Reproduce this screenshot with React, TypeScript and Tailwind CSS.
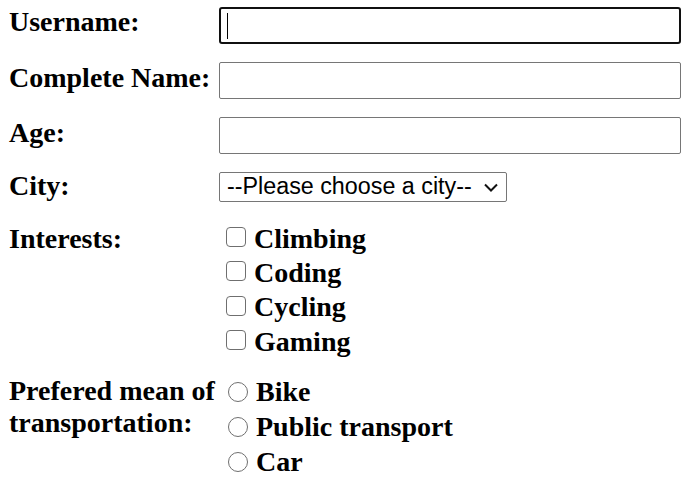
const interests = ['Climbing', 'Coding', 'Cycling', 'Gaming'];
const transports = ['Bike', 'Public transport', 'Car'];

function Label({ children, className = '' }: { children: React.ReactNode; className?: string }) {
  return <div className={`w-[210px] shrink-0 leading-[32px] ${className}`}>{children}</div>;
}

export default function App() {
  return (
    <div className="min-h-[496px] bg-white pl-[9px] pt-[7px] text-[28px] font-bold text-black font-['Liberation_Serif',serif]">
      <div className="flex flex-col gap-[18px]">
        <div className="flex items-center h-[37px]">
          <Label className="pb-[7px]">Username:</Label>
          <div className="flex items-center h-[37px] w-[462px] border-2 border-[#101010] rounded-[3px] px-[6px]">
            <span className="w-px h-[26px] bg-black" />
          </div>
        </div>
        <div className="flex items-center h-[37px]">
          <Label className="pb-[6px]">Complete Name:</Label>
          <input className="h-[37px] w-[462px] border border-[#767676] rounded-[2px] outline-none" />
        </div>
        <div className="flex items-center h-[37px]">
          <Label className="pb-[6px]">Age:</Label>
          <input className="h-[37px] w-[462px] border border-[#767676] rounded-[2px] outline-none" />
        </div>
        <div className="flex items-center h-[30px]">
          <Label className="pb-[2px]">City:</Label>
          <div className="relative h-[30px]">
            <select className="block appearance-none h-[30px] w-[288px] border border-[#767676] rounded-[2px] pl-[7px] text-[23.3px] font-normal font-['Liberation_Sans',sans-serif] leading-none">
              <option>--Please choose a city--</option>
            </select>
            <svg
              className="pointer-events-none absolute right-[9px] top-[11px]"
              width="14"
              height="9"
              viewBox="0 0 14 9"
              fill="none"
              stroke="#111"
              strokeWidth="2"
            >
              <polyline points="1,1.5 7,7.5 13,1.5" />
            </svg>
          </div>
        </div>
      </div>

      <div className="flex items-start mt-[18px]">
        <div className="pt-[3px]">
          <Label>Interests:</Label>
        </div>
        <div className="flex flex-col">
          {interests.map((i) => (
            <label key={i} className="flex items-center h-[34.3px]">
              <span className="ml-[7px] mr-[8px] w-[20px] h-[20px] border-[1.5px] border-[#6f6f6f] rounded-[4px]" />
              <span className="leading-[32px] pt-[3px]">{i}</span>
            </label>
          ))}
        </div>
      </div>

      <div className="flex items-start mt-[18px]">
        <div>
          <Label>
            Prefered mean of
            <br />
            transportation:
          </Label>
        </div>
        <div className="flex flex-col -mt-[1px]">
          {transports.map((t) => (
            <label key={t} className="flex items-center h-[35px]">
              <span className="ml-[9px] mr-[8px] w-[20px] h-[20px] border-[1.5px] border-[#6f6f6f] rounded-full" />
              <span className="leading-[32px]">{t}</span>
            </label>
          ))}
        </div>
      </div>
    </div>
  );
}
